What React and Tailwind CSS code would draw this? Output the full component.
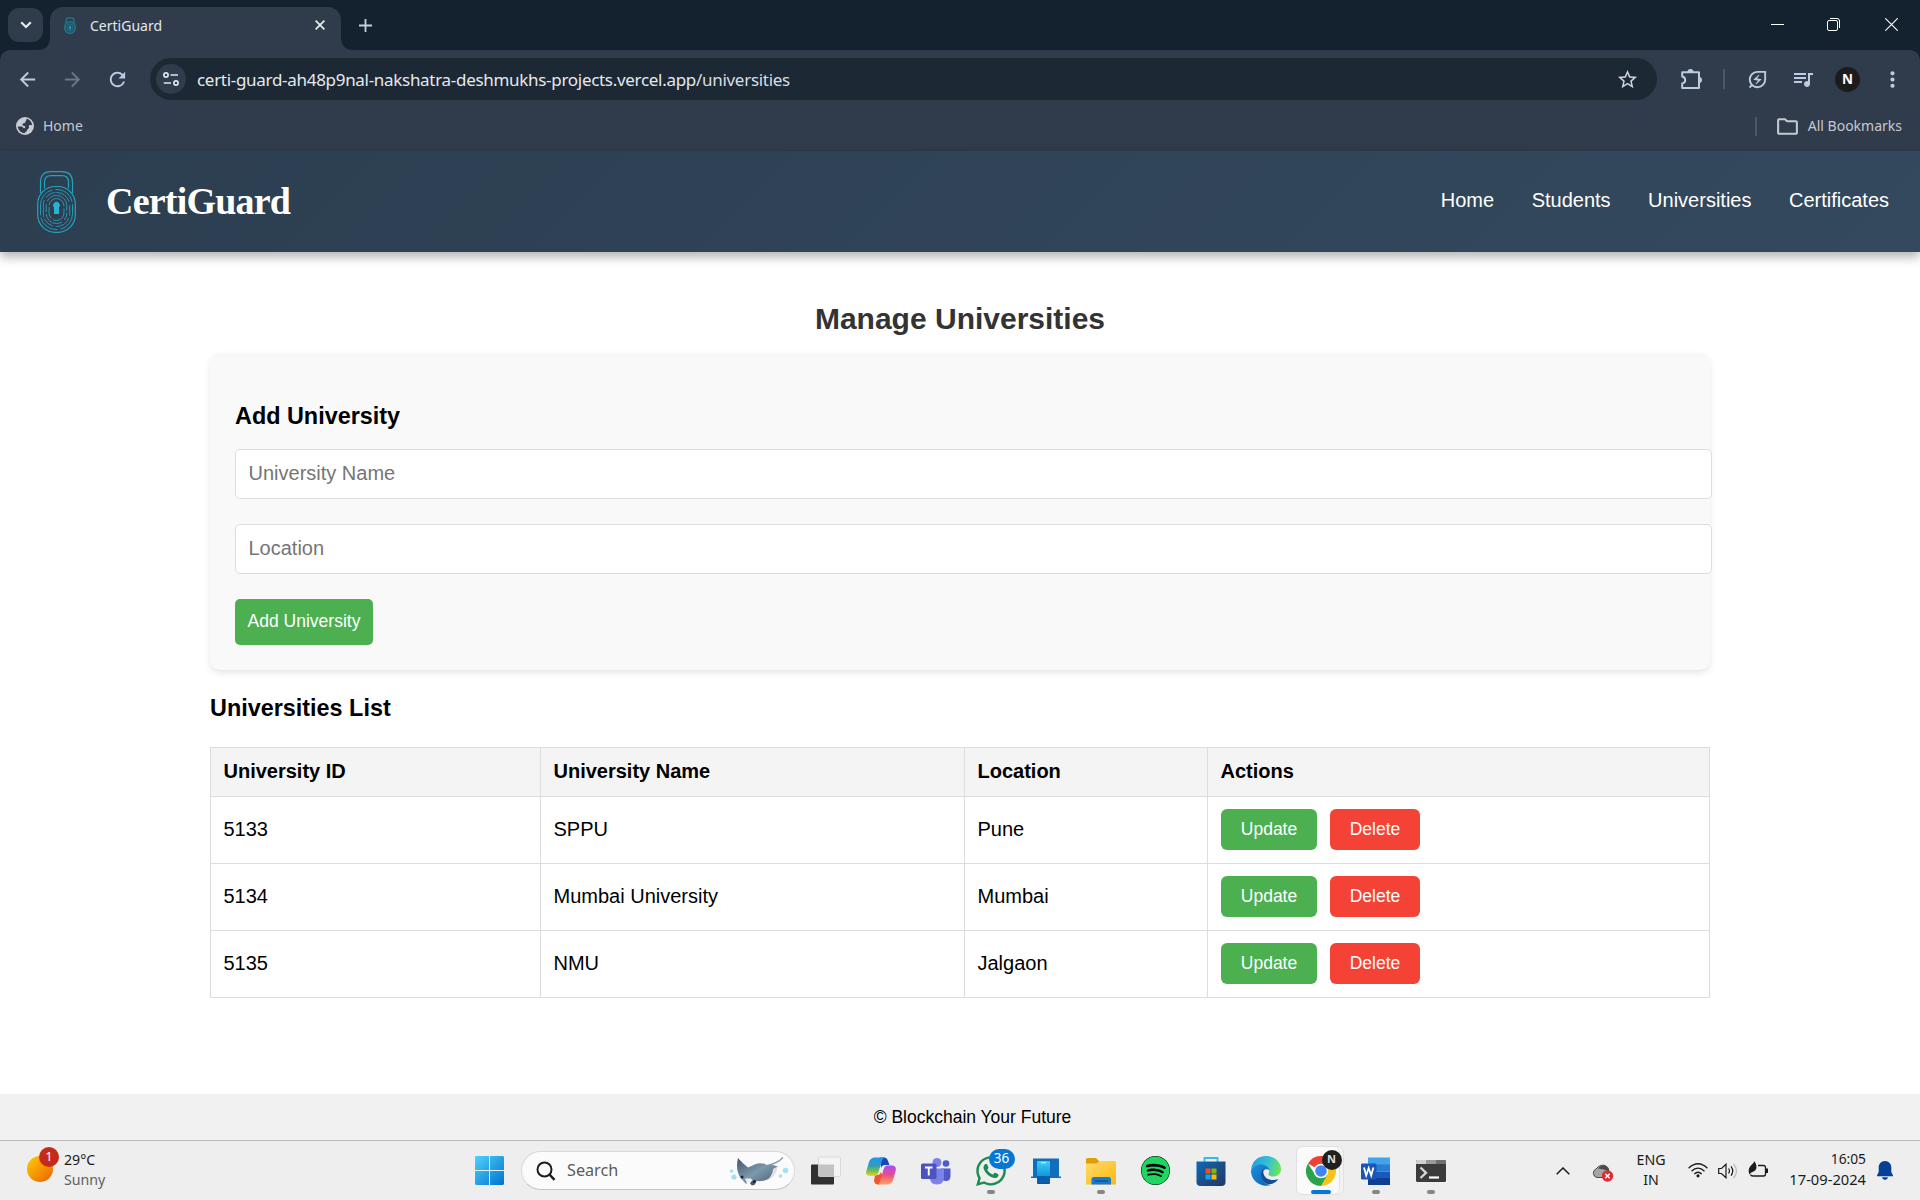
import {
  MdArrowBack, MdArrowForward, MdRefresh, MdStarBorder,
  MdOutlineEnergySavingsLeaf, MdQueueMusic, MdMoreVert, MdOutlineFolder,
} from "react-icons/md";
import { FaWhatsapp, FaSpotify } from "react-icons/fa";

const universities = [
  { id: "5133", name: "SPPU", location: "Pune" },
  { id: "5134", name: "Mumbai University", location: "Mumbai" },
  { id: "5135", name: "NMU", location: "Jalgaon" },
];

function LockLogo({ className }) {
  return (
    <svg viewBox="0 0 39 62" fill="none" stroke="#25a3bd" strokeWidth="1.2" className={className}>
      <path d="M3.500 22V11.500Q3.500 .7 14 .7H25Q35.500 .7 35.500 11.500V22" />
      <path d="M7.500 17.500V11Q7.500 4.700 14 4.700H25Q31.500 4.700 31.500 11V17.500" />
      <rect x=".7" y="15.500" width="37.600" height="45.800" rx="17.500" />
      <g strokeWidth=".9">
        <rect x="3.500" y="18.500" width="32" height="40" rx="15.500" strokeDasharray="22 2 31 3" />
        <rect x="6.300" y="21.500" width="26.400" height="34" rx="13" strokeDasharray="17 3 11 2" />
        <rect x="9.200" y="24.500" width="20.600" height="28" rx="10.200" strokeDasharray="21 2 8 3" />
        <rect x="12" y="27.500" width="15" height="22" rx="7.500" strokeDasharray="12 2 20 2" />
      </g>
      <path d="M17 43V36.500A3.300 3.300 0 1 1 22 36.500V43Z" fill="#25b4d2" stroke="none" />
    </svg>
  );
}

function TabStrip() {
  return (
    <div className="flex h-[50px] bg-[#14212e]">
      <div className="ml-2 mt-2 flex h-[34px] w-[35px] items-center justify-center rounded-[11px] bg-[#303b4b]">
        <svg viewBox="0 0 12 8" className="h-2 w-3" fill="none" stroke="#e6e9ee" strokeWidth="2.2"><path d="M1.200 1.200 6 6l4.800-4.800" /></svg>
      </div>
      <svg viewBox="0 0 13 13" className="-ml-[6px] mt-[37px] size-[13px]"><path d="M0 13Q13 13 13 0V13Z" fill="#303b4b" /></svg>
      <div className="mt-[7px] flex h-[43px] w-[291px] items-center rounded-t-[13px] bg-[#303b4b] pb-[7px] pl-3.5">
        <svg viewBox="0 0 12 17" className="h-[17px] w-3" fill="none" stroke="#22788d" strokeWidth="1.300">
          <path d="M2 6V3.500Q2 .8 4.500 .8H7.500Q10 .8 10 3.500V6" />
          <rect x=".7" y="4.700" width="10.600" height="11.600" rx="5" fill="#235468" />
          <rect x="3.200" y="7" width="5.600" height="7" rx="2.600" strokeWidth=".7" />
          <path d="M6 9V12.500" stroke="#2ba4be" strokeWidth="1.500" />
        </svg>
        <span className="ml-[14px] pt-px text-[14px] leading-5 text-[#e3e7ee]">CertiGuard</span>
        <svg viewBox="0 0 10 10" className="ml-auto mr-[16px] size-[10px]" stroke="#e6e9ee" strokeWidth="1.800"><path d="M.6.6l8.800 8.800M9.400.6.6 9.400" /></svg>
      </div>
      <svg viewBox="0 0 13 13" className="mt-[37px] size-[13px]"><path d="M13 13Q0 13 0 0V13Z" fill="#303b4b" /></svg>
      <svg viewBox="0 0 13 13" className="ml-[5px] mt-[19px] size-[13px]" stroke="#c3cfe2" strokeWidth="1.800"><path d="M6.500 0V13M0 6.500H13" /></svg>
      <svg viewBox="0 0 13 13" className="ml-auto mt-[18px] size-[13px]" stroke="#fff" strokeWidth="1"><path d="M0 6.500H13" /></svg>
      <svg viewBox="0 0 13 13" className="ml-[43px] mt-[18px] size-[13px]" fill="none" stroke="#fff" strokeWidth="1"><rect x=".5" y="2.500" width="10" height="10" rx="1.500" /><path d="M3 .5H10Q12.500.5 12.500 3V10" /></svg>
      <svg viewBox="0 0 13 13" className="ml-[45px] mr-[22px] mt-[18px] size-[13px]" stroke="#fff" strokeWidth="1.100"><path d="M.3.3l12.400 12.400M12.700.3.3 12.700" /></svg>
    </div>
  );
}

function Toolbar() {
  return (
    <div className="bg-[#14212e]">
      <div className="h-[101px] rounded-t-[10px] bg-[#303b4b] pt-2">
        <div className="flex h-[42px] items-center text-[#bccbe2]">
          <MdArrowBack className="ml-4 size-[23px]" />
          <MdArrowForward className="ml-[22px] size-[23px] text-[#6d7686]" />
          <MdRefresh className="ml-[22px] size-[23px]" />
          <div className="ml-[21px] flex h-[42px] w-[1507px] items-center rounded-full bg-[#1c2834] pl-1.5">
            <div className="flex size-[30px] items-center justify-center rounded-full bg-[#303b4b]">
              <svg viewBox="0 0 16 14" className="h-3.5 w-4" fill="none" stroke="#e0e4ea" strokeWidth="1.700">
                <circle cx="3" cy="3" r="2.100" /><path d="M7.500 3H15M.8 11H8" /><circle cx="13" cy="11" r="2.100" />
              </svg>
            </div>
            <span className="ml-[11px] whitespace-nowrap pt-px text-[17px] leading-6 tracking-[-0.3px] text-[#d9dde3]">
              <span className="text-[#e6e9ee]">certi-guard-ah48p9nal-nakshatra-deshmukhs-projects.vercel.app</span>/universities
            </span>
            <MdStarBorder className="ml-auto mr-[18px] size-[23px] text-[#cfd3da]" />
          </div>
          <svg viewBox="0 0 21 20" className="ml-[24px] h-5 w-[21px]" fill="none" stroke="currentColor" strokeWidth="2" strokeLinejoin="round">
            <path d="M1.200 3.200H18V19H1.200V14.500Q4.200 13.800 4.200 11T1.200 7.500Z" />
            <path d="M6.500 3A3 3 0 0 1 12.500 3ZM18 8A3 3 0 0 1 18 14Z" fill="currentColor" stroke="none" />
          </svg>
          <div className="ml-[21px] h-5 w-0.5 bg-[#4a576a]" />
          <MdOutlineEnergySavingsLeaf className="ml-[21px] size-[23px]" />
          <MdQueueMusic className="ml-[22px] size-6" />
          <div className="ml-[20px] flex size-[25px] items-center justify-center rounded-full bg-[#1c1c1c] text-[13.500px] font-bold text-white">N</div>
          <MdMoreVert className="ml-[20px] size-[25px]" />
        </div>
        <div className="mt-[14px] flex h-6 items-center text-[14px] text-[#c5c9cf]">
          <svg viewBox="0 0 18 18" className="ml-4 size-[18px]">
            <circle cx="9" cy="9" r="9" fill="#c9ccd1" />
            <path d="M10.500 1.800C13.500 2.300 16 5 16.200 8.500C15 8 14 7.800 13 8.500C12 9.300 13.500 10 13 11C12.500 12 11.500 11.800 11.200 13C11 14.500 9.500 14.500 8.500 16.200C5 16 2 13 1.800 9.500L5.500 9.500C7 9.500 6.500 11 8 11.200C9.500 11.300 9.800 9.500 8.500 9C7.500 8.500 6 8.500 6.500 7.200C7 6 9 6.500 9.300 5.200C9.500 4 10.800 3.500 10.500 1.800Z" fill="#303b4b" />
          </svg>
          <span className="ml-[9px] pb-0.5">Home</span>
          <div className="ml-auto h-[19px] w-0.5 bg-[#4a576a]" />
          <MdOutlineFolder className="ml-[18px] size-[25px]" />
          <span className="ml-2 mr-[18px] pb-0.5">All Bookmarks</span>
        </div>
      </div>
    </div>
  );
}

function SiteHeader() {
  return (
    <header className="relative flex h-[101px] items-center bg-[linear-gradient(135deg,#2c3e50,#34495e)] text-white shadow-[0_5px_10px_rgba(0,0,0,0.3)]">
      <LockLogo className="ml-[37px] h-[62px] w-[39px]" />
      <span className="ml-[30px] pb-0.5 font-['Liberation_Serif',serif] text-[38px] font-bold leading-[48px] tracking-[-0.8px]">CertiGuard</span>
      <nav className="ml-auto mr-[31px] flex gap-[37.500px] pb-[3px] text-xl">
        <a>Home</a>
        <a>Students</a>
        <a>Universities</a>
        <a>Certificates</a>
      </nav>
    </header>
  );
}

function AddForm() {
  return (
    <section className="mt-[15px] h-[317px] rounded-[10px] bg-[#f9f9f9] pl-[25px] pt-[49px] shadow-[0_3px_6px_rgba(0,0,0,0.1)]">
      <h3 className="text-[23.400px] font-bold leading-7 text-black">Add University</h3>
      <input placeholder="University Name" className="mt-[19px] block h-[50px] w-[1477px] rounded-[5px] border border-[#ddd] bg-white px-[12.500px] pb-px text-xl placeholder:text-[#757575]" />
      <input placeholder="Location" className="mt-[25px] block h-[50px] w-[1477px] rounded-[5px] border border-[#ddd] bg-white px-[12.500px] pb-px text-xl placeholder:text-[#757575]" />
      <button className="mt-[25px] block h-[46px] w-[138px] rounded-[5px] bg-[#4caf50] pb-px text-[17.500px] text-white">Add University</button>
    </section>
  );
}

function UniversityTable() {
  const row = "grid grid-cols-[330px_424px_243px_1fr] border-b border-[#ddd]";
  const cell = "flex items-center border-r border-[#ddd] pl-[12.500px] pb-0.5";
  return (
    <div className="mt-[25px] border-l border-t border-[#ddd] text-xl text-black">
      <div className={`${row} h-[49px] bg-[#f4f4f4] font-bold`}>
        {["University ID", "University Name", "Location", "Actions"].map((h) => (
          <div key={h} className={cell}>{h}</div>
        ))}
      </div>
      {universities.map((u) => (
        <div key={u.id} className={`${row} h-[67px]`}>
          <div className={cell}>{u.id}</div>
          <div className={cell}>{u.name}</div>
          <div className={cell}>{u.location}</div>
          <div className="flex items-center gap-[13px] border-r border-[#ddd] pb-0.5 pl-[13px] text-[17.500px] text-white">
            <button className="h-[41px] w-[96px] rounded-[6px] bg-[#4caf50] pt-px">Update</button>
            <button className="h-[41px] w-[90px] rounded-[6px] bg-[#f44336] pt-px">Delete</button>
          </div>
        </div>
      ))}
    </div>
  );
}

function WindowsIcon() {
  return (
    <svg viewBox="0 0 29 29" className="size-[29px]">
      <defs><linearGradient id="win" x1="0" y1="0" x2="1" y2="1"><stop stopColor="#4fd2fb" /><stop offset="1" stopColor="#0072d0" /></linearGradient></defs>
      <path fill="url(#win)" d="M1 0H14V14H0V1ZM15 0H28L29 1V14H15ZM0 15H14V29H1L0 28ZM15 15H29V28L28 29H15Z" />
    </svg>
  );
}

function MantaIcon() {
  return (
    <svg viewBox="0 0 60 32" className="h-8 w-[60px]">
      <defs><linearGradient id="manta" x1="0" y1="0" x2="1" y2="1"><stop stopColor="#3f566b" /><stop offset=".5" stopColor="#7d98ac" /><stop offset="1" stopColor="#4b5a70" /></linearGradient></defs>
      <path d="M36 11Q48 9 54 2.500" stroke="#8595a3" strokeWidth="1.200" fill="none" />
      <path d="M9 3C7 11 8 19 12.500 24L17 29L20 25.500Q22 26 23 29.500L28 26C37 27 46 22 48.500 11.500Q44 9 38 10Q32 7 27 9L19 12.500Q14 9 9 3Z" fill="url(#manta)" />
      <path d="M48.500 11.500Q48 21 38 26Q44 19 44 14Z" fill="#e4dfe8" />
      <path d="M16 23.500l2.500 6 1.500-4 3 3.500 2-2-3-3.500Z" fill="#eef3f7" />
      <path d="M21 28.500l2-3 4 .5-1 3.500-3 1Z" fill="#46566c" />
      <circle cx="13" cy="22" r="1.500" fill="#15233a" /><circle cx="25.500" cy="26.500" r="1.500" fill="#15233a" />
      <g fill="#a6dff0"><circle cx="2.500" cy="16" r="1.800" /><circle cx="5" cy="22" r="2.600" /><circle cx="51.500" cy="21" r="1.800" /><circle cx="56.500" cy="15.500" r="2.700" /></g>
    </svg>
  );
}

function TaskViewIcon() {
  return (
    <svg viewBox="0 0 30 30" className="size-[30px]">
      <rect x="0" y="8.500" width="23" height="20" rx="1" fill="#31312f" />
      <rect x="7.500" y="1" width="22" height="19.500" rx="1" fill="#f4f4f4" stroke="#d4d4d4" strokeWidth=".8" />
      <path d="M8 8.500H23V20H8Z" fill="#c3c3c3" />
    </svg>
  );
}

function CopilotIcon() {
  return (
    <svg viewBox="0 0 30 30" className="size-[30px]">
      <defs>
        <linearGradient id="cpA" x1="0" y1="0" x2="0" y2="1"><stop stopColor="#2094ef" /><stop offset=".45" stopColor="#2f9fb5" /><stop offset=".75" stopColor="#7cc243" /><stop offset="1" stopColor="#ffd21c" /></linearGradient>
        <linearGradient id="cpB" x1="0" y1="0" x2="0" y2="1"><stop stopColor="#a24ff0" /><stop offset=".5" stopColor="#ec4d8b" /><stop offset="1" stopColor="#ffa35a" /></linearGradient>
      </defs>
      <path d="M14 1.500H18Q21 1.500 22 5L23.500 9H19Q16 9 15 12Z" fill="#1748c0" />
      <path d="M9 19H12Q14 19 15 16L18 24Q17 28.500 12 28.500Q9 28.500 8 25Z" fill="#f0562f" />
      <path d="M9 1.500H19Q16.500 2 15.500 6L12.500 16Q11.500 20 8 20H4Q-1 20 .5 14.500L3 6Q4.500 1.500 9 1.500Z" fill="url(#cpA)" />
      <path d="M21 28.500H11Q13.500 28 14.500 24L17.500 13.500Q18.500 9.500 22 9.500H26Q31 9.500 29.500 15.500L27 24Q25.500 28.500 21 28.500Z" fill="url(#cpB)" />
    </svg>
  );
}

function TeamsIcon() {
  return (
    <svg viewBox="0 0 30 30" className="size-[30px]">
      <circle cx="25" cy="7.500" r="3.300" fill="#5059c9" /><path d="M20 12.500H29.500V20Q29.500 25 25 25Q20 25 20 20Z" fill="#5059c9" />
      <circle cx="16" cy="6.500" r="4.500" fill="#7b83eb" /><path d="M8.500 12.500H23V21Q23 28.500 16 28.500Q9 28.500 8.500 21Z" fill="#7b83eb" />
      <rect x="0" y="7.500" width="15.500" height="15.500" rx="1.500" fill="#4b53bc" />
      <path d="M4 11.500H11.500M7.750 11.500V19.500" stroke="#fff" strokeWidth="1.900" />
    </svg>
  );
}

function PhoneLinkIcon() {
  return (
    <svg viewBox="0 0 30 30" className="size-[30px]">
      <defs><linearGradient id="ph" x1="0" y1="0" x2="0" y2="1"><stop stopColor="#3bd0f5" /><stop offset=".65" stopColor="#1395df" /><stop offset="1" stopColor="#0c4f94" /></linearGradient></defs>
      <path d="M2 2.500H28V20.500H30V22H0V20.500H2Z" fill="#0f6fbe" />
      <rect x="6" y="5" width="13" height="23" rx="1" fill="url(#ph)" /><path d="M10 6.800H15" stroke="#d9f8ff" strokeWidth="1" />
      <rect x="6" y="20" width="13" height="5" fill="#0a5cad" />
    </svg>
  );
}

function FolderIcon() {
  return (
    <svg viewBox="0 0 30 30" className="size-[30px]">
      <defs><linearGradient id="fo" x1="0" y1="0" x2="1" y2="1"><stop stopColor="#ffdc6b" /><stop offset="1" stopColor="#fbb812" /></linearGradient></defs>
      <path d="M0 3.500Q0 2 1.500 2H10L13 5H20V9H0Z" fill="#e09d05" />
      <path d="M0 7.500H10.500L13.500 5H28.500Q30 5 30 6.500V28.500H0Z" fill="url(#fo)" />
      <path d="M5.500 28.500V23.500Q5.500 21 8 21H22.500Q25 21 25 23.500V28.500Z" fill="#1479cf" /><path d="M9 25H22" stroke="#0b4f92" strokeWidth="1.300" />
    </svg>
  );
}

function StoreIcon() {
  return (
    <svg viewBox="0 0 30 30" className="size-[30px]">
      <defs><linearGradient id="st" x1="0" y1="0" x2="1" y2="1"><stop stopColor="#0f69b8" /><stop offset="1" stopColor="#24365f" /></linearGradient></defs>
      <path d="M8.500 7V2H21.500V7" stroke="#2bbcf0" strokeWidth="1.800" fill="none" />
      <path d="M.5 5.500H29.500V26Q29.500 30 25.500 30H4.500Q.5 30 .5 26Z" fill="url(#st)" />
      <path d="M9.500 12.500h5v5h-5Z" fill="#f25022" /><path d="M15.500 12.500h5v5h-5Z" fill="#7fba00" /><path d="M9.500 18.500h5v5h-5Z" fill="#10a6ee" /><path d="M15.500 18.500h5v5h-5Z" fill="#ffb900" />
    </svg>
  );
}

function EdgeIcon() {
  return (
    <svg viewBox="0 0 30 30" className="size-[30px]">
      <defs>
        <linearGradient id="edA" x1="0" y1=".3" x2="1" y2=".5"><stop stopColor="#249ee0" /><stop offset=".55" stopColor="#35c0d5" /><stop offset="1" stopColor="#6ce853" /></linearGradient>
        <linearGradient id="edB" x1="0" y1="0" x2="1" y2="1"><stop stopColor="#1b8fdd" /><stop offset="1" stopColor="#0b62b4" /></linearGradient>
      </defs>
      <path d="M0 14C1 5 7 0 15 0C24 0 30 6 30 13C30 18 26 20.500 22 20.500C18.500 20.500 17 19 17.500 17.500C20 13 15 9 9.500 9C5 9 1.500 11 0 14Z" fill="url(#edA)" />
      <path d="M0 15C1 11 5 8.500 9.500 8.500C14 8.500 18 11 18.500 14C15 11.500 10 15 10.500 20C11 25 15 29 20 29C10 32 0 25 0 15Z" fill="url(#edB)" />
      <path d="M13 13C10 15 9 19 11 23C14 30 22 30 27.500 23C22 25.500 15.500 23.500 13.500 20C12 17.500 12 15 13 13Z" fill="#124f98" />
    </svg>
  );
}

function ChromeIcon() {
  return (
    <svg viewBox="0 0 30 30" className="size-[30px]">
      <path d="M15 15 2 7.500A15 15 0 0 1 28 7.500Z" fill="#ea4335" />
      <path d="M15 8H28.300A15 15 0 0 1 15 30L21 18.500Z" fill="#fbc116" />
      <path d="M2 7.500 9 18.500 21.500 18.500 15 30A15 15 0 0 1 2 7.500Z" fill="#2ba24c" />
      <circle cx="15" cy="15" r="7.300" fill="#fff" /><circle cx="15" cy="15" r="5.800" fill="#4285f4" />
    </svg>
  );
}

function WordIcon() {
  return (
    <svg viewBox="0 0 30 30" className="size-[30px]">
      <path d="M7 1.500H29V9H7Z" fill="#41a5ee" /><path d="M7 8.500H29V15.500H7Z" fill="#2b7cd3" /><path d="M7 15.500H29V22H7Z" fill="#185abd" /><path d="M7 22H29V29H7Z" fill="#103f91" />
      <rect x="0" y="7.500" width="15.500" height="16" rx="1.300" fill="#1d55b4" />
      <path d="M3 11.500 5.200 19.500 7.700 12 10.200 19.500 12.400 11.500" stroke="#fff" strokeWidth="1.800" fill="none" />
    </svg>
  );
}

function TerminalIcon() {
  return (
    <svg viewBox="0 0 30 30" className="size-[30px]">
      <rect x="0" y="4" width="30" height="22" rx="1.500" fill="#3b3b3b" /><path d="M0 8V5.500Q0 4 1.500 4H10V8Z" fill="#d0d0d0" /><path d="M10 4H20V8H10Z" fill="#999" /><path d="M20 4H28.500Q30 4 30 5.500V8H20Z" fill="#6f6f6f" />
      <path d="M4.500 11.500 10 16.800 4.500 22" stroke="#d5d5d5" strokeWidth="2.400" fill="none" /><path d="M13 21.500H23" stroke="#fff" strokeWidth="2.200" />
    </svg>
  );
}

function TaskbarItem({ children, running, active }) {
  return (
    <div className="relative flex h-full w-[55px] items-center justify-center">
      {active && (
        <div className="absolute left-[3px] top-[5px] h-[49px] w-12 rounded-md border border-[#e1e1e1] bg-[#f3f3f3]">
          <div className="h-full w-[43px] rounded-md border-r border-[#e1e1e1] bg-[#fafafa]" />
        </div>
      )}
      <div className="relative">{children}</div>
      {running && <div className="absolute bottom-[6px] h-1 w-2 rounded-full bg-[#868686]" />}
      {active && <div className="absolute bottom-[6px] h-1 w-5 rounded-full bg-[#0678d4]" />}
    </div>
  );
}

function Taskbar() {
  return (
    <div className="flex h-[60px] items-center border-t border-[#bcbcbc] bg-[#eeeeee] text-[14.200px] text-[#1b1b1b]">
      <div className="relative ml-[27px] mb-[3px] size-[26px] rounded-full bg-linear-to-br from-[#ffcc00] to-[#e85d04]">
        <div className="absolute -top-[9px] left-[12px] flex size-5 items-center justify-center rounded-full bg-[#c42b1c] text-[13px] text-white">1</div>
      </div>
      <div className="ml-[11px] w-[399px] pb-[2px] leading-5"><div>29°C</div><div className="text-[#606060]">Sunny</div></div>
      <div className="ml-[12px]"><WindowsIcon /></div>
      <div className="ml-[17px] flex h-[39px] w-[274px] items-center rounded-full border border-[#d9d9d9] border-b-[#c4c4c4] bg-[#fbfbfb]">
        <svg viewBox="0 0 20 20" className="ml-[14px] size-[20px]" fill="none" stroke="#1d1d1d" strokeWidth="2"><circle cx="8.500" cy="8.500" r="7" /><path d="M13.500 13.500 18.500 18.800" strokeWidth="2.500" /></svg>
        <span className="ml-[11px] text-[16.200px] text-[#5c5c5c]">Search</span>
        <div className="ml-auto mr-[5px]"><MantaIcon /></div>
      </div>
      <div className="ml-[3px] flex h-full">
        <TaskbarItem><TaskViewIcon /></TaskbarItem>
        <TaskbarItem><CopilotIcon /></TaskbarItem>
        <TaskbarItem><TeamsIcon /></TaskbarItem>
        <TaskbarItem running>
          <FaWhatsapp className="size-[34px] text-[#1c8b54]" />
          <span className="absolute -top-[5px] left-[15px] flex h-5 w-[26px] items-center justify-center rounded-full bg-[#0678d4] text-[13.500px] text-white">36</span>
        </TaskbarItem>
        <TaskbarItem><PhoneLinkIcon /></TaskbarItem>
        <TaskbarItem running><FolderIcon /></TaskbarItem>
        <TaskbarItem><div className="rounded-full bg-black"><FaSpotify className="size-[29px] text-[#1ed760]" /></div></TaskbarItem>
        <TaskbarItem><StoreIcon /></TaskbarItem>
        <TaskbarItem><EdgeIcon /></TaskbarItem>
        <TaskbarItem active>
          <ChromeIcon />
          <span className="absolute -top-[6px] left-[16px] flex size-5 items-center justify-center rounded-full bg-[#202020] text-[11px] font-bold text-[#ddd]">N</span>
        </TaskbarItem>
        <TaskbarItem running><WordIcon /></TaskbarItem>
        <TaskbarItem running><TerminalIcon /></TaskbarItem>
      </div>
      <div className="ml-auto flex items-center">
        <svg viewBox="0 0 14 8" className="h-2 w-3.5" fill="none" stroke="#1b1b1b" strokeWidth="1.500"><path d="M.7 7.200 7 1l6.300 6.200" /></svg>
        <svg viewBox="0 0 22 18" className="ml-[22px] mt-1 h-[18px] w-[22px]">
          <path d="M5 13.500A4.500 4.500 0 0 1 4 5Q8 0 13 1.500Q17 3 17 7.500Q15 13.500 11 13.500Z" fill="#a5a5a5" stroke="#4a4a4a" strokeWidth="1" /><path d="M6 4.500Q10-.5 15 3Q17 5 17 7.500Q12 5 6 4.500Z" fill="#4a4a4a" />
          <circle cx="15.500" cy="12" r="5.700" fill="#dc2a30" /><path d="M13.300 9.800l4.400 4.400M17.700 9.800l-4.400 4.400" stroke="#fff" strokeWidth="1.500" />
        </svg>
        <div className="ml-[22px] w-[30px] pb-px text-center leading-5"><div>ENG</div><div>IN</div></div>
        <svg viewBox="0 0 20 15" className="ml-[22px] h-[15px] w-5" fill="none" stroke="#1b1b1b" strokeWidth="1.300"><path d="M.6 5.200Q10-3.600 19.400 5.200M3.500 8.200Q10 2 16.500 8.200M6.300 11Q10 7.500 13.700 11" /><circle cx="10" cy="12.800" r="1.600" fill="#1b1b1b" stroke="none" /></svg>
        <svg viewBox="0 0 20 16" className="ml-[10px] h-4 w-5" fill="none" stroke="#1b1b1b" strokeWidth="1.200"><path d="M.7 5.500H3.500L8 1.200V14.800L3.500 10.500H.7ZM10.500 5.500Q12.500 8 10.500 10.500M13 3.300Q16.500 8 13 12.700" /><path d="M15.500 1Q21.500 8 15.500 15" stroke="#bbb" /></svg>
        <svg viewBox="0 0 21 17" className="mb-[3px] ml-[10px] h-[17px] w-[21px]" fill="none" stroke="#1b1b1b" strokeWidth="1.300"><path d="M10 4.500H15.500Q17.500 4.500 17.500 6.500V13Q17.500 15 15.500 15H5Q3 15 2.500 13.500" /><path d="M18 7.500H20V12H18Z" fill="#1b1b1b" stroke="none" /><path d="M1 12C-.5 6 4 4.500 6.500.3C9 4 9.500 9 5.500 10.500Q3.500 11 1 13.500Z" fill="#1b1b1b" stroke="none" /></svg>
        <div className="ml-[19px] w-[78px] pb-[3px] text-right leading-5"><div className="text-[13.800px]">16:05</div><div className="whitespace-nowrap text-[14.700px]">17-09-2024</div></div>
        <svg viewBox="0 0 16 19" className="ml-[11px] mr-[27px] h-[19px] w-4" fill="#063f94"><path d="M8 0C12 0 14.300 3 14.300 6.500V11L16 14.500V15.300H0V14.500L1.700 11V6.500C1.700 3 4 0 8 0ZM5 16.300H11Q10.500 19 8 19Q5.500 19 5 16.300Z" /></svg>
      </div>
    </div>
  );
}

export default function App() {
  return (
    <div className="flex h-[1200px] w-[1920px] flex-col overflow-hidden bg-white font-['Liberation_Sans',sans-serif]">
      <div className="font-['Noto_Sans',sans-serif]"><TabStrip /><Toolbar /></div>
      <SiteHeader />
      <main className="mx-auto w-[1500px] grow pt-[48px]">
        <h2 className="text-center text-[30px] font-bold leading-[38px] text-[#333]">Manage Universities</h2>
        <AddForm />
        <h3 className="mt-[24px] text-[23.400px] font-bold leading-7 text-black">Universities List</h3>
        <UniversityTable />
      </main>
      <footer className="h-[46px] bg-[#f1f1f1] pl-[25px] text-center text-[17.500px] leading-[46px] text-black">© Blockchain Your Future</footer>
      <div className="font-['Noto_Sans',sans-serif]"><Taskbar /></div>
    </div>
  );
}
